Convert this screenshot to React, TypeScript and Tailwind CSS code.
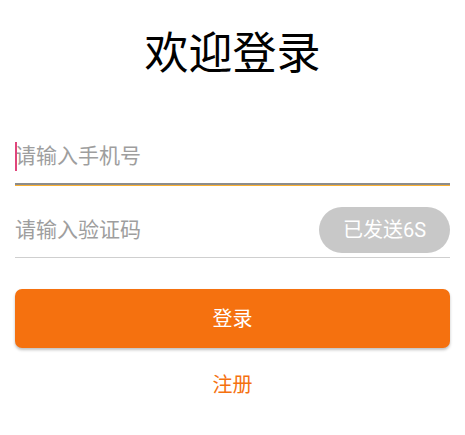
import React from "react";

const font = { fontFamily: 'Roboto, "Noto Sans CJK SC", sans-serif' };

const App = () => {
  return (
    <div className="w-[465px] h-[435px] bg-white px-[15px]" style={font}>
      <h1 className="pt-[29px] text-center text-[44px] leading-[50px] font-normal text-black">
        欢迎登录
      </h1>

      {/* phone */}
      <div className="mt-[52px]">
        <div className="relative flex items-center h-[52px]">
          <span className="absolute left-0 top-[11px] w-[2px] h-[29px] bg-[#e0457b]" />
          <span className="text-[21px] text-[#9e9e9e]">请输入手机号</span>
        </div>
        <div className="h-[2px] bg-[#8c8c8c]" />
        <div className="h-[1px] bg-[#fbb131]" />
      </div>

      {/* code */}
      <div className="flex items-center justify-between h-[72px] pt-[16px] border-b border-[#cfcfcf]">
        <span className="text-[21px] text-[#9e9e9e] mt-[3px]">请输入验证码</span>
        <button className="w-[131px] h-[46px] rounded-full bg-[#c8c8c8] text-white text-[20px]">
          已发送6S
        </button>
      </div>

      <button className="mt-[31px] w-full h-[59px] rounded-[7px] bg-[#f5710f] text-white text-[20px] shadow-[0_2px_3px_rgba(0,0,0,0.25)]">
        登录
      </button>

      <div className="mt-[22px] text-center text-[20px] text-[#f5710f]">注册</div>
    </div>
  );
};

export default App;
